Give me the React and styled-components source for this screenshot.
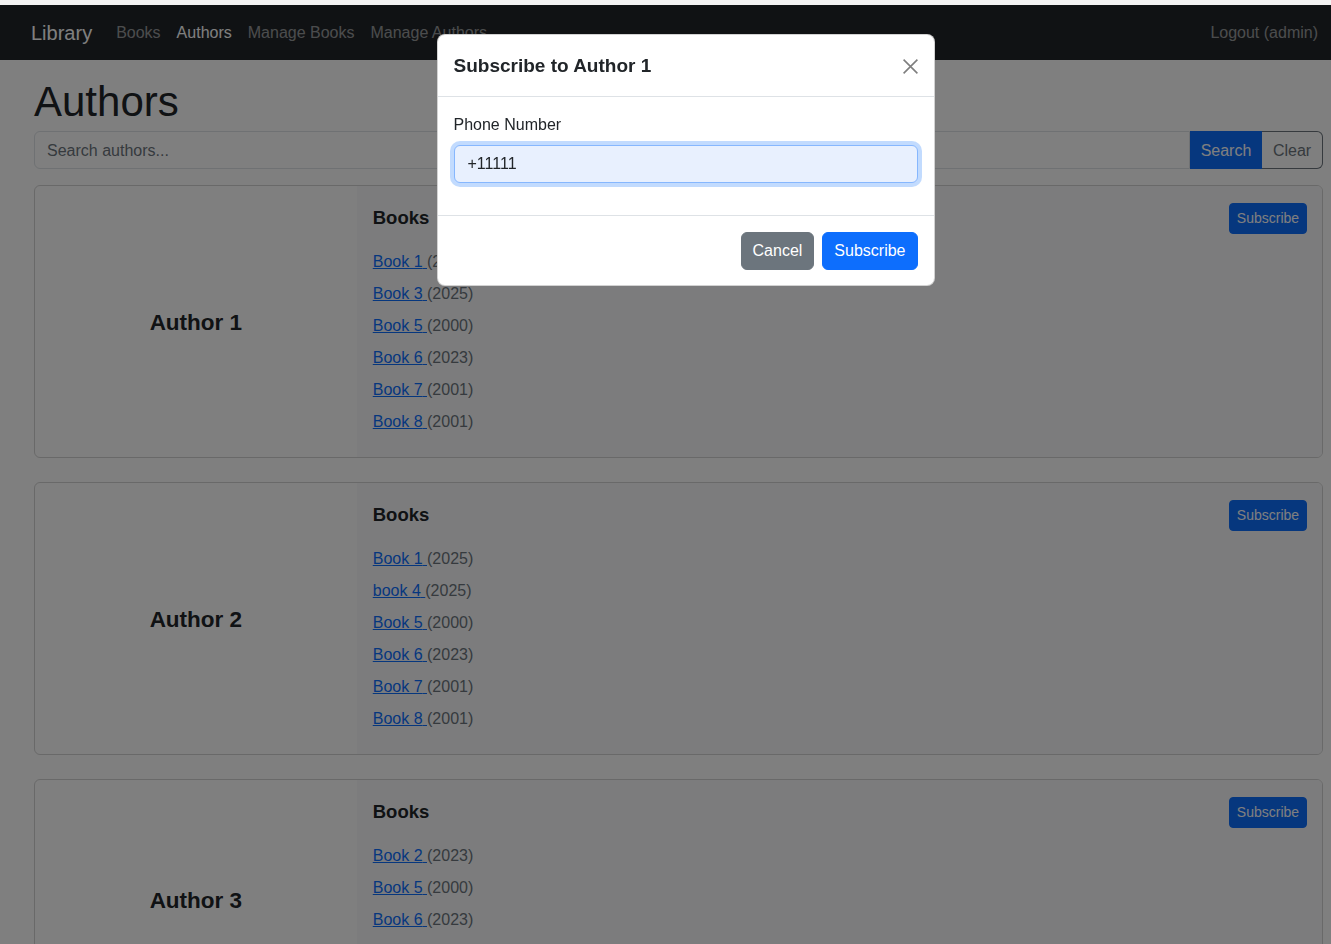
import React, { useEffect, useRef } from "react";
import styled, { createGlobalStyle } from "styled-components";

const authors = [
  {
    name: "Author 1",
    books: [
      { title: "Book 1", year: 2025 },
      { title: "Book 3", year: 2025 },
      { title: "Book 5", year: 2000 },
      { title: "Book 6", year: 2023 },
      { title: "Book 7", year: 2001 },
      { title: "Book 8", year: 2001 },
    ],
  },
  {
    name: "Author 2",
    books: [
      { title: "Book 1", year: 2025 },
      { title: "book 4", year: 2025 },
      { title: "Book 5", year: 2000 },
      { title: "Book 6", year: 2023 },
      { title: "Book 7", year: 2001 },
      { title: "Book 8", year: 2001 },
    ],
  },
  {
    name: "Author 3",
    books: [
      { title: "Book 2", year: 2023 },
      { title: "Book 5", year: 2000 },
      { title: "Book 6", year: 2023 },
      { title: "Book 7", year: 2001 },
      { title: "Book 8", year: 2001 },
    ],
  },
];

const App = () => {
  const phoneRef = useRef(null);

  // keep the caret at the end of the typed number
  useEffect(() => {
    const el = phoneRef.current;
    if (el) {
      el.focus();
      el.setSelectionRange(el.value.length, el.value.length);
    }
  }, []);

  return (
    <>
      <GlobalStyle />
      <Navbar>
        <NavLeft>
          <Brand href="#">Library</Brand>
          <NavLink href="#">Books</NavLink>
          <NavLink href="#" $active>Authors</NavLink>
          <NavLink href="#">Manage Books</NavLink>
          <NavLink href="#">Manage Authors</NavLink>
        </NavLeft>
        <NavLink href="#">Logout (admin)</NavLink>
      </Navbar>

      <Main>
        <PageTitle>Authors</PageTitle>
        <SearchGroup>
          <SearchInput placeholder="Search authors..." />
          <SearchButton>Search</SearchButton>
          <ClearButton>Clear</ClearButton>
        </SearchGroup>

        {authors.map((author) => (
          <AuthorCard key={author.name}>
            <AuthorCol>
              <AuthorName>{author.name}</AuthorName>
            </AuthorCol>
            <BooksCol>
              <BooksHeader>
                <BooksTitle>Books</BooksTitle>
                <SmallButton>Subscribe</SmallButton>
              </BooksHeader>
              <BookList>
                {author.books.map((book, i) => (
                  <BookItem key={i}>
                    <BookLink href="#">{book.title} </BookLink>
                    <Year>({book.year})</Year>
                  </BookItem>
                ))}
              </BookList>
            </BooksCol>
          </AuthorCard>
        ))}
      </Main>

      <Backdrop>
        <ModalBox>
          <ModalHeader>
            <ModalTitle>Subscribe to Author 1</ModalTitle>
            <CloseButton aria-label="Close">
              <svg width="17" height="17" viewBox="0 0 16 16">
                <path d="M1.5 1.5 L14.5 14.5 M14.5 1.5 L1.5 14.5" stroke="#000" strokeWidth="1.5" fill="none" />
              </svg>
            </CloseButton>
          </ModalHeader>
          <ModalBody>
            <FieldLabel htmlFor="phone">Phone Number</FieldLabel>
            <PhoneInput id="phone" ref={phoneRef} defaultValue="+11111" />
          </ModalBody>
          <ModalFooter>
            <Button $variant="secondary">Cancel</Button>
            <Button $variant="primary">Subscribe</Button>
          </ModalFooter>
        </ModalBox>
      </Backdrop>
    </>
  );
};

export default App;

// Styled Components
const GlobalStyle = createGlobalStyle`
  * { box-sizing: border-box; }
  body {
    margin: 0;
    font-family: "Segoe UI", "Liberation Sans", Arial, sans-serif;
    font-size: 16px;
    line-height: 1.5;
    color: #212529;
    background: #fff;
    border-top: 5px solid #f3f3f3;
    overflow: hidden;
  }
`;

const Navbar = styled.nav`
  display: flex;
  align-items: center;
  justify-content: space-between;
  height: 55px;
  padding: 1px 5px 0 31px;
  background: #212529;
`;

const NavLeft = styled.div`
  display: flex;
  align-items: center;
`;

const Brand = styled.a`
  font-size: 20px;
  color: #fff;
  text-decoration: none;
  margin-right: 16px;
`;

const NavLink = styled.a`
  padding: 8px;
  font-size: 16px;
  text-decoration: none;
  color: ${(p) => (p.$active ? "#fff" : "rgba(255, 255, 255, 0.55)")};
`;

const Main = styled.main`
  padding: 18px 8px 0 34px;
`;

const PageTitle = styled.h1`
  margin: 0 0 5px;
  font-size: 42px;
  font-weight: 500;
  line-height: 48px;
`;

const SearchGroup = styled.div`
  display: flex;
  height: 38px;
  margin-bottom: 16px;
`;

const SearchInput = styled.input`
  flex: 1;
  padding: 7px 12px 5px;
  font: inherit;
  color: #212529;
  border: 1px solid #dee2e6;
  border-radius: 6px 0 0 6px;
  outline: none;
  &::placeholder { color: #6c757d; }
`;

const SearchButton = styled.button`
  width: 72px;
  padding-top: 2px;
  font: inherit;
  color: #fff;
  background: #0d6efd;
  border: 1px solid #0d6efd;
`;

const ClearButton = styled.button`
  width: 61px;
  padding-top: 2px;
  font: inherit;
  color: #6c757d;
  background: transparent;
  border: 1px solid #6c757d;
  border-left: none;
  border-radius: 0 6px 6px 0;
`;

const AuthorCard = styled.div`
  display: flex;
  margin-bottom: 24px;
  border: 1px solid rgba(0, 0, 0, 0.175);
  border-radius: 6px;
  overflow: hidden;
`;

const AuthorCol = styled.div`
  flex: 0 0 25%;
  display: flex;
  align-items: center;
  justify-content: center;
  padding-top: 1px;
`;

const AuthorName = styled.h4`
  margin: 0;
  font-size: 22.5px;
  font-weight: 700;
  line-height: 1.2;
`;

const BooksCol = styled.div`
  flex: 1;
  padding: 16px 15px 16px 16px;
  background: #f8f9fa;
`;

const BooksHeader = styled.div`
  display: flex;
  align-items: center;
  justify-content: space-between;
  margin: 1px 0 12px;
`;

const BooksTitle = styled.h5`
  margin: 0;
  font-size: 18.5px;
  font-weight: 700;
  line-height: 1.2;
`;

const SmallButton = styled.button`
  width: 78px;
  height: 31px;
  padding: 4px 0;
  font: inherit;
  font-size: 14px;
  color: #fff;
  background: #0d6efd;
  border: 1px solid #0d6efd;
  border-radius: 4px;
`;

const BookList = styled.ul`
  list-style: none;
  margin: 0 0 3px;
  padding: 0;
`;

const BookItem = styled.li`
  padding: 4px 0;
  line-height: 24px;
`;

const BookLink = styled.a`
  color: #0d6efd;
  text-decoration: underline;
  white-space: pre;
`;

const Year = styled.span`
  color: #6c757d;
`;

const Backdrop = styled.div`
  position: fixed;
  top: 5px;
  left: 0;
  right: 0;
  bottom: 0;
  z-index: 1050;
  display: flex;
  justify-content: center;
  align-items: flex-start;
  padding: 29px 0 0 40px;
  background: rgba(0, 0, 0, 0.5);
`;

const ModalBox = styled.div`
  width: 498px;
  background: #fff;
  border: 1px solid rgba(0, 0, 0, 0.175);
  border-radius: 8px;
`;

const ModalHeader = styled.div`
  display: flex;
  align-items: center;
  justify-content: space-between;
  padding: 16px 15px 15px 16px;
  border-bottom: 1px solid #dee2e6;
`;

const ModalTitle = styled.h5`
  margin: 0;
  font-size: 19px;
  font-weight: 700;
  line-height: 30px;
`;

const CloseButton = styled.button`
  display: flex;
  padding: 0;
  background: none;
  border: none;
  opacity: 0.5;
`;

const ModalBody = styled.div`
  padding: 16px 16px 32px;
`;

const FieldLabel = styled.label`
  display: block;
  margin-bottom: 8px;
  font-size: 16px;
`;

const PhoneInput = styled.input`
  display: block;
  width: 100%;
  height: 38px;
  padding: 6px 13px;
  font: inherit;
  color: #212529;
  caret-color: #000;
  background: #e8f0fe;
  border: 1px solid #86b7fe;
  border-radius: 6px;
  outline: none;
  box-shadow: 0 0 0 4px rgba(13, 110, 253, 0.25);
`;

const ModalFooter = styled.div`
  display: flex;
  justify-content: flex-end;
  gap: 8px;
  padding: 16px 16px 15px;
  border-top: 1px solid #dee2e6;
`;

const Button = styled.button`
  height: 38px;
  padding: 6px 11px;
  font: inherit;
  color: #fff;
  border-radius: 6px;
  background: ${(p) => (p.$variant === "primary" ? "#0d6efd" : "#6c757d")};
  border: 1px solid ${(p) => (p.$variant === "primary" ? "#0d6efd" : "#6c757d")};
`;
